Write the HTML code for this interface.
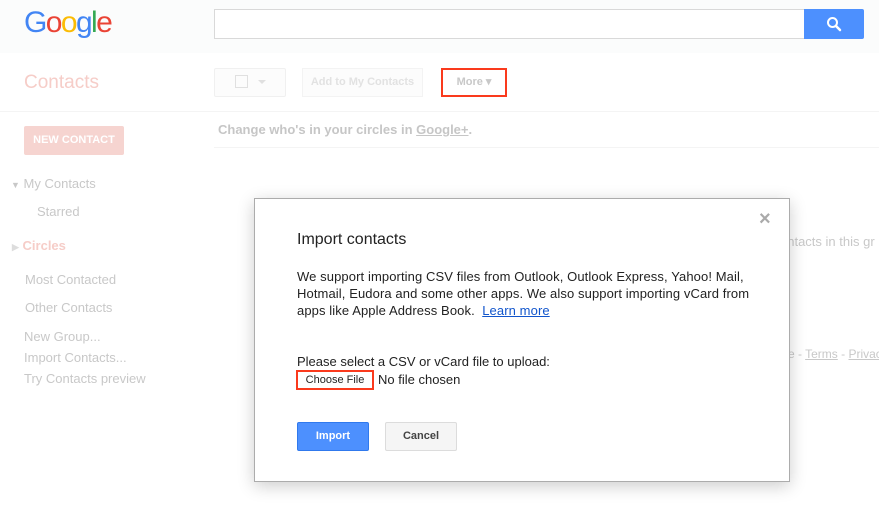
<!DOCTYPE html>
<html><head><style>
*{margin:0;padding:0;box-sizing:border-box}
body{width:879px;height:508px;overflow:hidden;background:#fff;font-family:"Liberation Sans",Arial,sans-serif;position:relative}
.a{position:absolute;white-space:nowrap}
.hdr{left:0;top:0;width:879px;height:53px;background:#fbfcfc}
.side{color:#c8c8c8;font-size:13px}
</style></head><body>
<div class="a hdr"></div>
<div class="a" style="left:24px;top:6px;font-size:30px;letter-spacing:-1.6px;font-family:'Liberation Sans',sans-serif"><span style="color:#4285f4">G</span><span style="color:#ea4335">o</span><span style="color:#fbbc05">o</span><span style="color:#4285f4">g</span><span style="color:#34a853">l</span><span style="color:#ea4335">e</span></div>
<div class="a" style="left:214px;top:9px;width:591px;height:30px;border:1px solid #d9d9d9;background:#fff"></div>
<div class="a" style="left:804px;top:9px;width:60px;height:30px;background:#4d90fe;border-radius:0 2px 2px 0"></div>
<svg class="a" style="left:825px;top:15px" width="18" height="18" viewBox="0 0 18 18"><circle cx="7.5" cy="7.5" r="4.5" stroke="#fff" stroke-width="2" fill="none"/><path d="M11 11L15 15" stroke="#fff" stroke-width="2.5" stroke-linecap="round"/></svg>
<div class="a" style="left:24px;top:72px;font-size:19px;color:#f6cdc8">Contacts</div>
<div class="a" style="left:214px;top:68px;width:72px;height:29px;border:1px solid #f0f0f0;border-radius:2px;background:#fcfcfc"></div>
<div class="a" style="left:235px;top:75px;width:13px;height:13px;border:1px solid #e0e0e0"></div>
<div class="a" style="left:258px;top:80px;border:4px solid transparent;border-top-color:#e0e0e0"></div>
<div class="a" style="left:302px;top:68px;width:121px;height:29px;border:1px solid #f3f3f3;background:#fcfcfc;font-size:11px;font-weight:bold;color:#e2e2e2;text-align:center;line-height:27px">Add to My Contacts</div>
<div class="a" style="left:441px;top:68px;width:66px;height:29px;border:2px solid #fa3a1d;font-size:11px;font-weight:bold;color:#c8c8c8;text-align:center;line-height:25px">More ▾</div>
<div class="a" style="left:0;top:111px;width:879px;height:1px;background:#f4f4f4"></div>
<div class="a" style="left:24px;top:126px;width:100px;height:29px;background:#f6d4d0;border-radius:2px;color:#fff;font-size:11px;font-weight:bold;text-align:center;line-height:29px">NEW CONTACT</div>
<div class="a" style="left:218px;top:122px;font-size:13px;font-weight:bold;color:#c6c6c6">Change who's in your circles in <u>Google+</u>.</div>
<div class="a" style="left:214px;top:147px;width:665px;height:1px;background:#f4f4f4"></div>
<div class="a side" style="left:11px;top:176px"><span style="font-size:9px">▼</span> My Contacts</div>
<div class="a side" style="left:37px;top:204px">Starred</div>
<div class="a side" style="left:12px;top:238px;color:#f6cdc8;font-weight:bold"><span style="font-size:9px;color:#ddd">▶</span> Circles</div>
<div class="a side" style="left:25px;top:272px">Most Contacted</div>
<div class="a side" style="left:25px;top:300px">Other Contacts</div>
<div class="a side" style="left:24px;top:329px">New Group...</div>
<div class="a side" style="left:24px;top:350px">Import Contacts...</div>
<div class="a side" style="left:24px;top:371px">Try Contacts preview</div>
<div class="a side" style="left:780px;top:234px">ontacts in this gr</div>
<div class="a side" style="left:788px;top:347px;font-size:12px">e - <u>Terms</u> - <u>Privacy</u></div>
<div class="a" style="left:254px;top:198px;width:536px;height:284px;background:#fff;border:1px solid #acacac;box-shadow:0 4px 16px rgba(0,0,0,.2)"></div>
<div class="a" style="left:759px;top:208px;font-size:20px;color:#aaa;font-weight:bold">×</div>
<div class="a" style="left:297px;top:231px;font-size:16px;color:#222">Import contacts</div>
<div class="a" style="left:297px;top:268px;font-size:13px;color:#222;line-height:17px;letter-spacing:0.1px">We support importing CSV files from Outlook, Outlook Express, Yahoo! Mail,<br>Hotmail, Eudora and some other apps. We also support importing vCard from<br>apps like Apple Address Book.&nbsp; <u style="color:#15c">Learn more</u></div>
<div class="a" style="left:297px;top:354px;font-size:13px;color:#222">Please select a CSV or vCard file to upload:</div>
<div class="a" style="left:296px;top:370px;width:78px;height:20px;border:2px solid #fa3a1d;font-size:11px;color:#222;text-align:center;line-height:16px">Choose File</div>
<div class="a" style="left:378px;top:372px;font-size:13px;color:#222">No file chosen</div>
<div class="a" style="left:297px;top:422px;width:72px;height:29px;background:#4d90fe;border:1px solid #3079ed;border-radius:2px;color:#fff;font-size:11px;font-weight:bold;text-align:center;line-height:27px">Import</div>
<div class="a" style="left:385px;top:422px;width:72px;height:29px;background:#f5f5f5;border:1px solid #dcdcdc;border-radius:2px;color:#444;font-size:11px;font-weight:bold;text-align:center;line-height:27px">Cancel</div>
</body></html>
